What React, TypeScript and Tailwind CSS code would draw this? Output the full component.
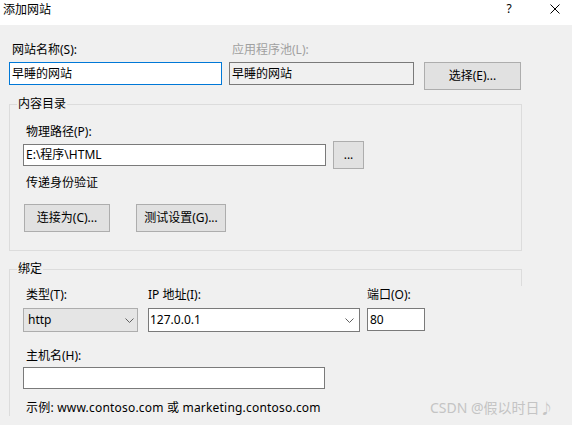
import type { ReactNode } from 'react';

const font = 'font-["Noto_Sans","Noto_Sans_CJK_SC",sans-serif]';

function Chevron() {
  return (
    <svg width="9" height="5" viewBox="0 0 9 5" className="shrink-0">
      <path d="M0.5 0.5 L4.5 4.5 L8.5 0.5" fill="none" stroke="#606060" strokeWidth="1" />
    </svg>
  );
}

function Button({ children, className = '' }: { children: ReactNode; className?: string }) {
  return (
    <div
      className={`flex h-[28px] items-center justify-center border border-[#adadad] bg-[#e1e1e1] leading-[16px] ${className}`}
    >
      {children}
    </div>
  );
}

function TextBox({ value, className = '' }: { value?: string; className?: string }) {
  return (
    <div className={`flex items-center border border-[#7a7a7a] bg-white pl-[2px] leading-[16px] ${className}`}>
      {value}
    </div>
  );
}

export default function App() {
  return (
    <div className={`relative h-[425px] w-[572px] overflow-hidden bg-[#f0f0f0] text-[12px] text-black ${font}`}>
      {/* title bar */}
      <div className="flex h-[25px] items-start bg-white">
        <span className="ml-[3px] mt-[2px] flex-1 leading-[16px]">添加网站</span>
        <span className="mt-[1px] w-[10px] text-center leading-[16px]">?</span>
        <svg width="10" height="10" viewBox="0 0 10 10" className="ml-[36px] mr-[12px] mt-[4px]">
          <path d="M0.5 0.5 L9.5 9.5 M9.5 0.5 L0.5 9.5" stroke="#000" strokeWidth="1" />
        </svg>
      </div>

      {/* site name / app pool */}
      <div className="mt-[17px] flex leading-[16px]">
        <span className="ml-[12px] w-[220px]">网站名称(S):</span>
        <span className="text-[#a0a0a0]">应用程序池(L):</span>
      </div>
      <div className="mt-[4px] flex items-start">
        <div className="ml-[9px] flex h-[23px] w-[213px] items-center border border-[#0078d7] bg-white pl-[2px] leading-[16px]">
          早睡的网站
        </div>
        <div className="ml-[7px] flex h-[23px] w-[185px] items-center border border-[#7a7a7a] bg-[#f0f0f0] pl-[2px] leading-[16px]">
          早睡的网站
        </div>
        <Button className="ml-[10px] w-[97px]">选择(E)...</Button>
      </div>

      {/* content directory */}
      <fieldset className="ml-[9px] mt-[6px] w-[513px] border border-[#dcdcdc] pb-[18px] pt-[12px]">
        <legend className="ml-[7px] px-[1px] leading-[16px]">内容目录</legend>
        <div className="ml-[16px] leading-[16px]">物理路径(P):</div>
        <div className="mt-[1px] flex items-center">
          <TextBox value="E:\程序\HTML" className="ml-[13px] h-[22px] w-[303px]" />
          <Button className="ml-[7px] w-[31px]">...</Button>
        </div>
        <div className="ml-[16px] mt-[6px] leading-[16px]">传递身份验证</div>
        <div className="mt-[13px] flex">
          <Button className="ml-[14px] w-[86px]">连接为(C)...</Button>
          <Button className="ml-[26px] w-[90px]">测试设置(G)...</Button>
        </div>
      </fieldset>

      {/* binding */}
      <fieldset className="relative ml-[9px] mt-[10px] w-[513px] border-l border-t border-[#dcdcdc] pt-[10px]">
        <legend className="ml-[7px] px-[1px] leading-[16px]">绑定</legend>
        <div className="absolute right-0 top-[-8px] h-[17px] w-px bg-[#dcdcdc]" />
        <div className="flex leading-[16px]">
          <span className="ml-[16px] w-[122px]">类型(T):</span>
          <span className="w-[219px]">IP 地址(I):</span>
          <span>端口(O):</span>
        </div>
        <div className="mt-[5px] flex items-start">
          <div className="ml-[13px] flex h-[24px] w-[115px] items-center justify-between border border-[#adadad] bg-[#e5e5e5] pl-[4px] pr-[3px] leading-[16px]">
            <span>http</span>
            <Chevron />
          </div>
          <div className="ml-[10px] flex h-[24px] w-[212px] items-center justify-between border border-[#7a7a7a] bg-white pl-[1px] pr-[5px] leading-[16px]">
            <span>127.0.0.1</span>
            <Chevron />
          </div>
          <TextBox value="80" className="ml-[7px] h-[23px] w-[58px]" />
        </div>
        <div className="ml-[16px] mt-[16px] leading-[16px]">主机名(H):</div>
        <TextBox className="ml-[13px] mt-[3px] h-[22px] w-[302px]" />
        <div className="ml-[16px] mt-[11px] leading-[16px] tracking-[0.2px]">
          示例: www.contoso.com 或 marketing.contoso.com
        </div>
      </fieldset>

      {/* watermark */}
      <div className="absolute left-[430px] top-[399px] text-[14px] leading-[18px] text-[#c4c4c4]">CSDN @假以时日♪</div>
    </div>
  );
}
